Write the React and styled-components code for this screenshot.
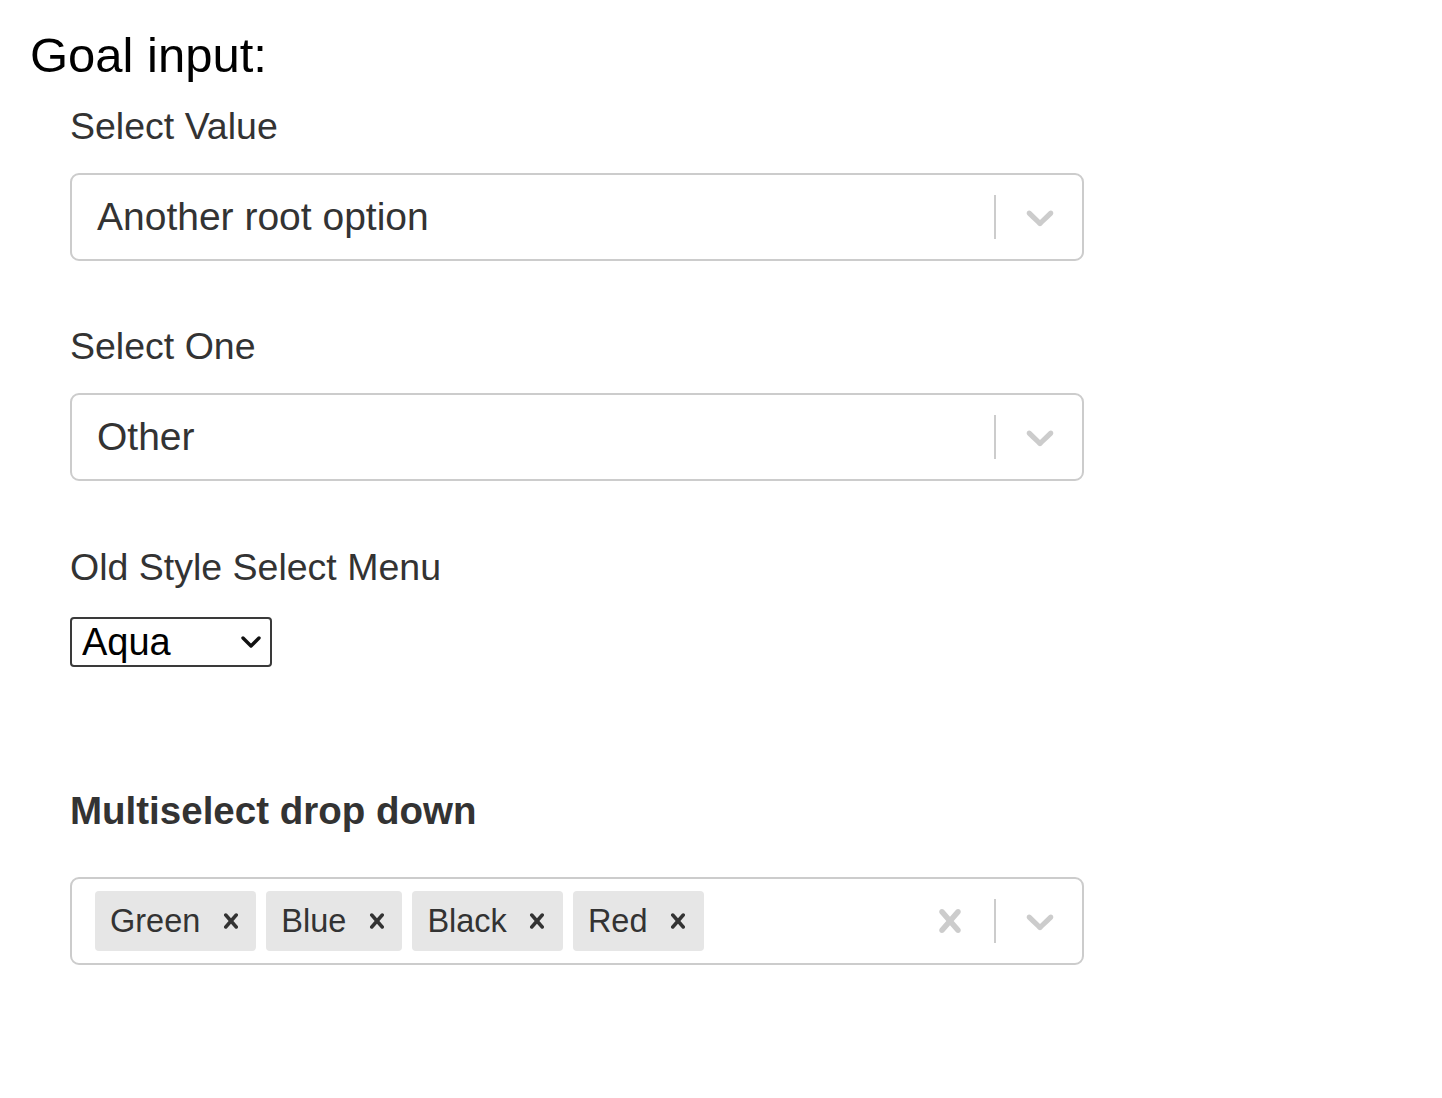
import styled, { createGlobalStyle } from 'styled-components';

const GlobalStyle = createGlobalStyle`
    body {
        margin: 0;
        background: #fff;
        font-family: "Liberation Sans", Arial, sans-serif;
    }
`;

const Chevron = () => (
    <svg width="46" height="46" viewBox="0 0 20 20" fill="currentColor">
        <path d="M4.516 7.548c0.436-0.446 1.043-0.481 1.576 0l3.908 3.747 3.908-3.747c0.533-0.481 1.141-0.446 1.574 0 0.436 0.445 0.408 1.197 0 1.615-0.406 0.418-4.695 4.502-4.695 4.502-0.217 0.223-0.502 0.335-0.787 0.335s-0.57-0.112-0.789-0.335c0 0-4.287-4.084-4.695-4.502s-0.436-1.17 0-1.615z" />
    </svg>
);

const Cross = ({ size = 46 }) => (
    <svg width={size} height={size} viewBox="0 0 20 20" fill="currentColor">
        <path d="M14.348 14.849c-0.469 0.469-1.229 0.469-1.697 0l-2.651-3.030-2.651 3.029c-0.469 0.469-1.229 0.469-1.697 0-0.469-0.469-0.469-1.229 0-1.697l2.758-3.15-2.759-3.152c-0.469-0.469-0.469-1.228 0-1.697s1.228-0.469 1.697 0l2.652 3.031 2.651-3.031c0.469-0.469 1.228-0.469 1.697 0s0.469 1.229 0 1.697l-2.758 3.152 2.758 3.15c0.469 0.469 0.469 1.229 0 1.698z" />
    </svg>
);

const NativeChevron = () => (
    <svg width="22" height="14" viewBox="0 0 22 14" fill="none" stroke="#111" strokeWidth="3.4" strokeLinecap="round" strokeLinejoin="round">
        <path d="M3 3 L11 11 L19 3" />
    </svg>
);

const SelectBox = ({ value }) => (
    <Control>
        <ValueArea>
            <SingleValue>{value}</SingleValue>
        </ValueArea>
        <Indicators>
            <Separator />
            <IndicatorIcon><Chevron /></IndicatorIcon>
        </Indicators>
    </Control>
);

const MultiSelect = ({ values }) => (
    <Control>
        <ChipArea>
            {values.map((v) => (
                <Chip key={v}>
                    <ChipLabel>{v}</ChipLabel>
                    <ChipRemove><Cross size={30} /></ChipRemove>
                </Chip>
            ))}
        </ChipArea>
        <Indicators>
            <IndicatorIcon $clear><Cross /></IndicatorIcon>
            <Separator />
            <IndicatorIcon><Chevron /></IndicatorIcon>
        </Indicators>
    </Control>
);

const App = () => {
    return (
        <Page>
            <GlobalStyle />
            <Heading>Goal input:</Heading>
            <Form>
                <Field $top={21}>
                    <Label>Select Value</Label>
                    <SelectBox value="Another root option" />
                </Field>
                <Field $top={63}>
                    <Label>Select One</Label>
                    <SelectBox value="Other" />
                </Field>
                <Field $top={64} $gap={28}>
                    <Label>Old Style Select Menu</Label>
                    <NativeWrap>
                        <NativeSelect defaultValue="Aqua">
                            <option>Aqua</option>
                            <option>Red</option>
                            <option>Green</option>
                        </NativeSelect>
                        <NativeArrow><NativeChevron /></NativeArrow>
                    </NativeWrap>
                </Field>
                <Field $top={122} $gap={44}>
                    <Label $bold>Multiselect drop down</Label>
                    <MultiSelect values={['Green', 'Blue', 'Black', 'Red']} />
                </Field>
            </Form>
        </Page>
    );
};

export default App;

const Page = styled.div`
    padding: 27px 0 0 30px;
    width: 1442px;
    height: 1098px;
    box-sizing: border-box;
`;

const Heading = styled.h1`
    margin: 0;
    font-size: 49px;
    font-weight: 400;
    line-height: 56px;
    color: #000;
`;

const Form = styled.div`
    display: flex;
    flex-direction: column;
    padding-left: 40px;
    width: 1014px;
`;

const Field = styled.div`
    display: flex;
    flex-direction: column;
    gap: ${(p) => p.$gap ?? 25}px;
    margin-top: ${(p) => p.$top}px;
`;

const Label = styled.label`
    line-height: 44px;
    color: #333;
    font-weight: ${(p) => (p.$bold ? 700 : 400)};
    font-size: ${(p) => (p.$bold ? '38.5px' : '37.5px')};
`;

const Control = styled.div`
    display: flex;
    align-items: center;
    height: 88px;
    box-sizing: border-box;
    border: 2px solid #cccccc;
    border-radius: 9px;
    background: #fff;
`;

const ValueArea = styled.div`
    flex: 1;
    padding-left: 25px;
    overflow: hidden;
`;

const SingleValue = styled.span`
    font-size: 39px;
    color: #333;
    white-space: nowrap;
`;

const Indicators = styled.div`
    display: flex;
    align-items: center;
    align-self: stretch;
    padding-right: 19px;
`;

const Separator = styled.span`
    width: 2px;
    height: 44px;
    background: #cccccc;
    margin-right: 21px;
`;

const IndicatorIcon = styled.span`
    display: flex;
    align-items: center;
    color: #cccccc;
    margin-right: ${(p) => (p.$clear ? '21px' : '0')};
`;

const ChipArea = styled.div`
    flex: 1;
    display: flex;
    gap: 10px;
    padding-left: 23px;
`;

const Chip = styled.div`
    display: flex;
    align-items: center;
    height: 60px;
    background: #e6e6e6;
    border-radius: 4px;
`;

const ChipLabel = styled.span`
    font-size: 32.5px;
    color: #333;
    padding-left: 15px;
    padding-right: 5px;
`;

const ChipRemove = styled.span`
    display: flex;
    align-items: center;
    justify-content: center;
    width: 51px;
    color: #333;
`;

const NativeWrap = styled.div`
    position: relative;
    width: 202px;
    height: 50px;
`;

const NativeSelect = styled.select`
    appearance: none;
    width: 100%;
    height: 100%;
    box-sizing: border-box;
    border: 2px solid #3a3a3a;
    border-radius: 4px;
    background: #fff;
    padding: 0 0 0 10px;
    font-family: "Liberation Sans", Arial, sans-serif;
    font-size: 38px;
    color: #000;
    outline: none;
`;

const NativeArrow = styled.span`
    position: absolute;
    right: 10px;
    top: 18px;
    pointer-events: none;
    display: flex;
`;
